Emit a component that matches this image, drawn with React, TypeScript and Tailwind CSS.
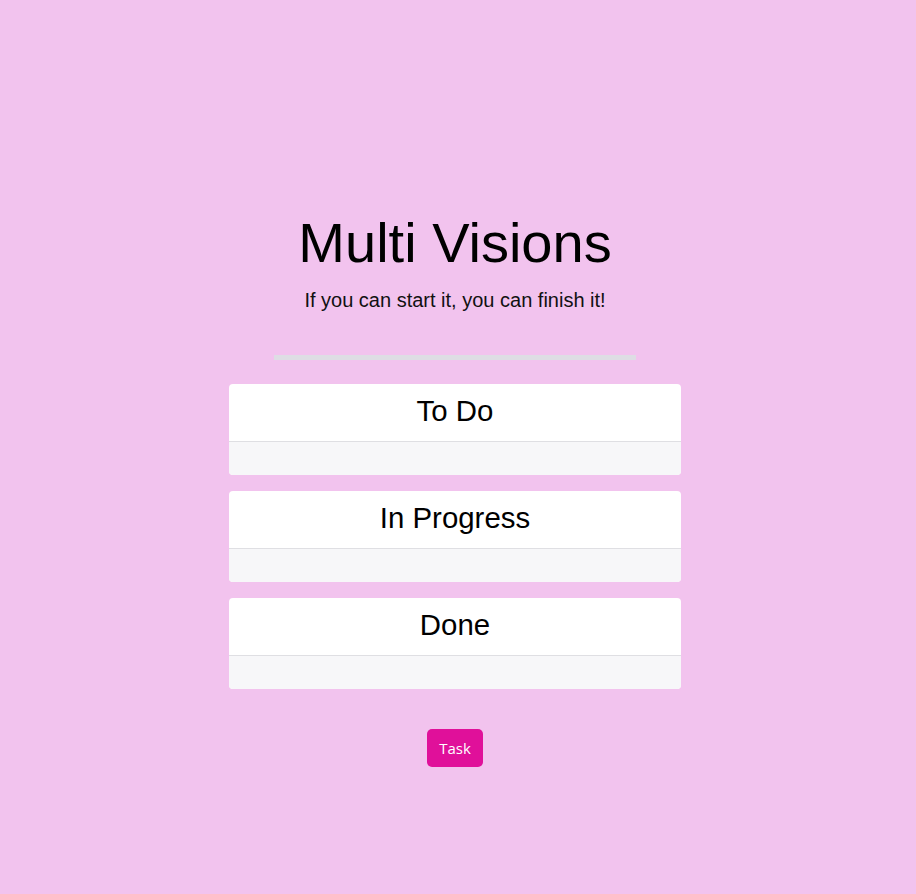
import React from 'react';

const columns = ['To Do', 'In Progress', 'Done'];

const Column: React.FC<{ title: string }> = ({ title }) => (
  <div className="w-[452px] rounded-[4px] overflow-hidden bg-white">
    <div className="h-[58px] pb-[4px] flex items-center justify-center border-b border-[#dfdfe3]">
      <h2 className="text-[29.4px] leading-[1.2] text-black">{title}</h2>
    </div>
    <div className="h-[33px] bg-[#f7f7f9]"></div>
  </div>
);

const App: React.FC = () => {
  return (
    <div className="min-h-[894px] w-full bg-[#f2c3ee] flex flex-col items-center pt-[209px] pr-[6px] font-['Liberation_Sans',Arial,sans-serif]">
      <h1 className="text-[56px] leading-[1.2] text-black">Multi Visions</h1>
      <p className="mt-[9px] text-[20px] leading-[30px] text-[#111]">If you can start it, you can finish it!</p>
      <div className="mt-[40px] w-[362px] h-[5px] bg-[#dedde4]"></div>
      <div className="mt-[24px] flex flex-col gap-[16px]">
        {columns.map((c) => (
          <Column key={c} title={c} />
        ))}
      </div>
      <button className="mt-[40px] w-[56px] h-[38px] rounded-[5px] bg-[#e0109a] text-white text-[15px] font-['Open_Sans',sans-serif]">
        Task
      </button>
    </div>
  );
};

export default App;
